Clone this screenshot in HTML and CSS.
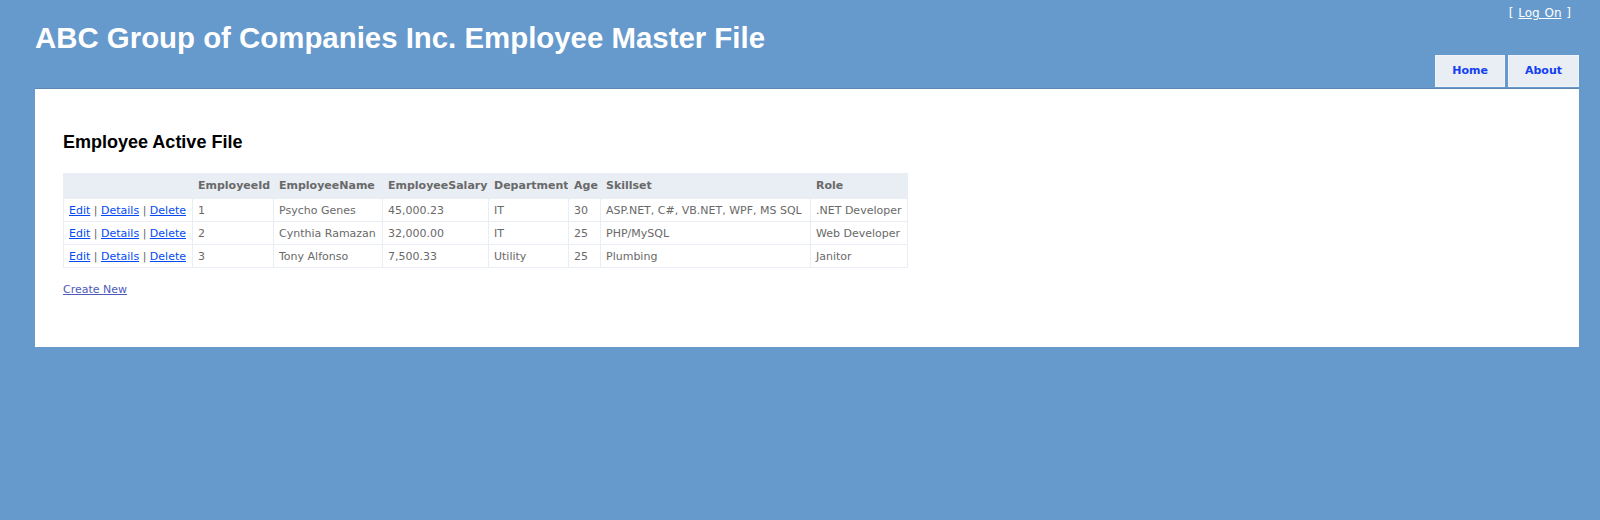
FILE: index.html
```html
<!DOCTYPE html>
<html>
<head>
<meta charset="utf-8">
<title>Employee Master File</title>
<link rel="stylesheet" href="styles.css">
</head>
<body>
<div class="page">
  <div class="header">
    <div class="login">[ <a href="#">Log On</a> ]</div>
    <div class="title-row">
      <h1 class="title">ABC Group of Companies Inc. Employee Master File</h1>
    </div>
    <ul class="menu">
      <li><a href="#">Home</a></li>
      <li><a href="#">About</a></li>
    </ul>
  </div>
  <div class="main">
    <h2 class="heading">Employee Active File</h2>
    <table class="grid">
      <colgroup>
        <col class="c1"><col class="c2"><col class="c3"><col class="c4"><col class="c5"><col class="c6"><col class="c7"><col class="c8">
      </colgroup>
      <thead>
        <tr>
          <th></th>
          <th>EmployeeId</th>
          <th>EmployeeName</th>
          <th>EmployeeSalary</th>
          <th>Department</th>
          <th>Age</th>
          <th>Skillset</th>
          <th>Role</th>
        </tr>
      </thead>
      <tbody>
        <tr>
          <td><a href="#">Edit</a> | <a href="#">Details</a> | <a href="#">Delete</a></td>
          <td>1</td>
          <td>Psycho Genes</td>
          <td>45,000.23</td>
          <td>IT</td>
          <td>30</td>
          <td>ASP.NET, C#, VB.NET, WPF, MS SQL</td>
          <td>.NET Developer</td>
        </tr>
        <tr>
          <td><a href="#">Edit</a> | <a href="#">Details</a> | <a href="#">Delete</a></td>
          <td>2</td>
          <td>Cynthia Ramazan</td>
          <td>32,000.00</td>
          <td>IT</td>
          <td>25</td>
          <td>PHP/MySQL</td>
          <td>Web Developer</td>
        </tr>
        <tr>
          <td><a href="#">Edit</a> | <a href="#">Details</a> | <a href="#">Delete</a></td>
          <td>3</td>
          <td>Tony Alfonso</td>
          <td>7,500.33</td>
          <td>Utility</td>
          <td>25</td>
          <td>Plumbing</td>
          <td>Janitor</td>
        </tr>
      </tbody>
    </table>
    <p class="create"><a class="visited" href="#">Create New</a></p>
  </div>
</div>
</body>
</html>
```

FILE: styles.css
```css
html, body {
  margin: 0;
  padding: 0;
}
body {
  background-color: #6699cc;
  font-family: "DejaVu Sans", Verdana, sans-serif;
  font-size: 11px;
  color: #696969;
}
a {
  color: #034af3;
  text-decoration: underline;
}
a.visited {
  color: #505abc;
}
.page {
  width: 1544px;
  margin-left: 35px;
}
.header {
  display: flex;
  flex-direction: column;
}
.login {
  height: 22px;
  line-height: 26px;
  text-align: right;
  padding-right: 8px;
  font-size: 12px;
  color: #ffffff;
  word-spacing: 1px;
}
.login a {
  color: #ffffff;
}
.title-row {
  height: 33px;
}
.title {
  margin: 0;
  font-family: "Liberation Sans", Arial, sans-serif;
  font-weight: bold;
  font-size: 29.4px;
  line-height: 33px;
  color: #ffffff;
  position: relative;
  top: -1px;
}
.menu {
  list-style: none;
  margin: 0;
  padding: 0 0 1px 0;
  border-bottom: 1px solid #5c87b2;
  display: flex;
  justify-content: flex-end;
  gap: 3px;
}
.menu li {
  display: block;
}
.menu a {
  display: block;
  height: 30px;
  line-height: 30px;
  padding: 0 16px;
  border: 1px solid #f0f4f8;
  background-color: #e8eef4;
  color: #1440f0;
  font-weight: bold;
  font-size: 11px;
  text-decoration: none;
}
.main {
  background-color: #ffffff;
  padding: 42px 28px 52px 28px;
  height: 258px;
  box-sizing: border-box;
}
.heading {
  margin: 0 0 20px 0;
  font-family: "Liberation Sans", Arial, sans-serif;
  font-weight: bold;
  font-size: 18px;
  line-height: 22px;
  color: #000000;
}
.grid {
  border-collapse: collapse;
  border: 1px solid #e8eef4;
  table-layout: fixed;
  width: 844px;
}
.c1 { width: 129px; }
.c2 { width: 81px; }
.c3 { width: 109px; }
.c4 { width: 106px; }
.c5 { width: 80px; }
.c6 { width: 32px; }
.c7 { width: 210px; }
.c8 { width: 97px; }
.grid th {
  background-color: #e8eef4;
  border: 1px solid #e8eef4;
  text-align: left;
  padding: 6px 5px;
  line-height: 12px;
  font-weight: bold;
  white-space: nowrap;
  overflow: hidden;
}
.grid td {
  border: 1px solid #e8eef4;
  padding: 6px 5px 4px 5px;
  line-height: 12px;
  white-space: nowrap;
  overflow: hidden;
}
.create {
  margin: 15px 0 0 0;
  line-height: 13px;
}
```
